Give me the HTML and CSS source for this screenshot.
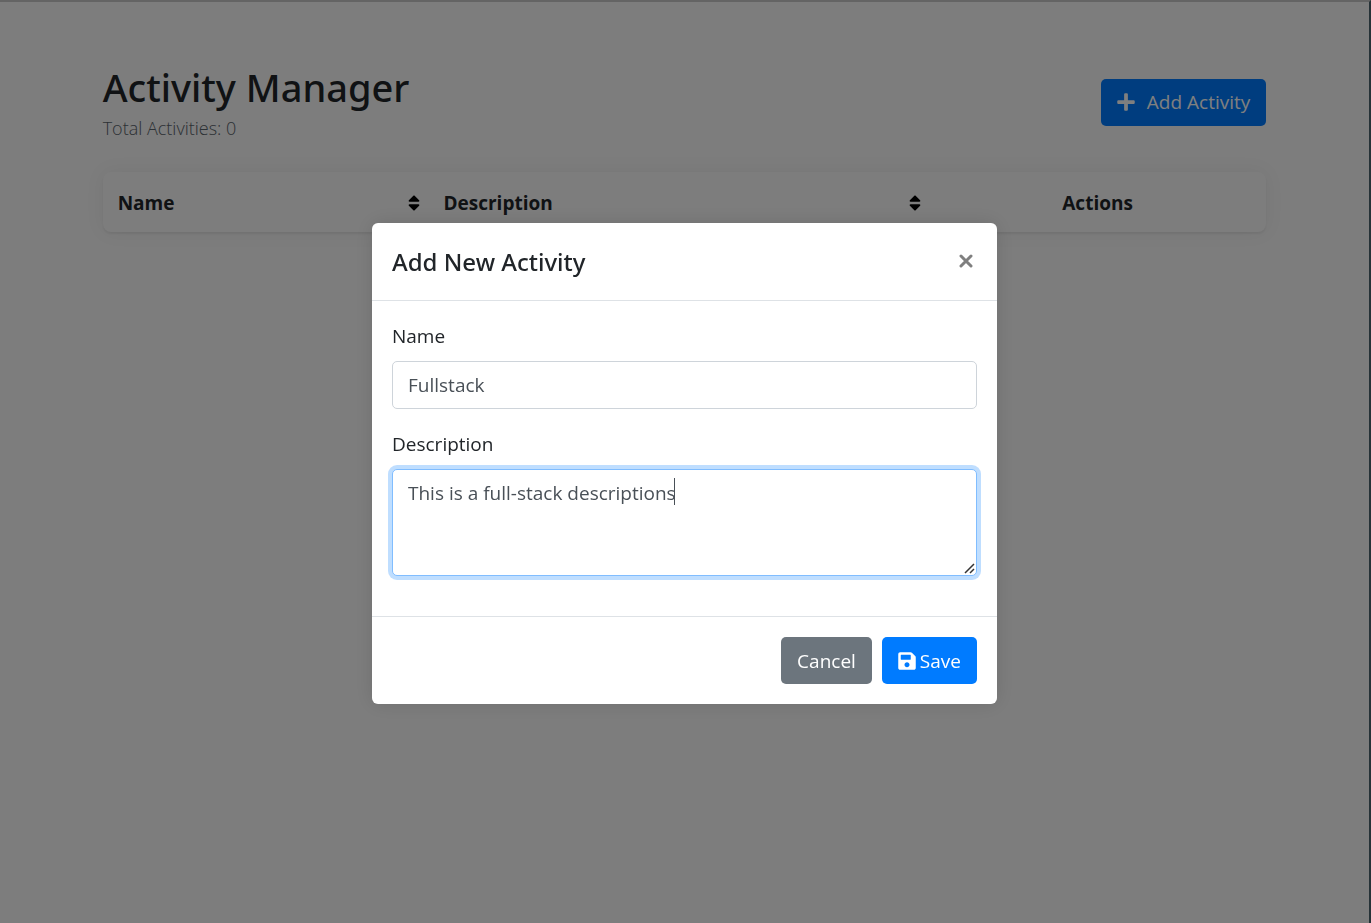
FILE: index.html
```html
<!DOCTYPE html>
<html lang="en">
<head>
<meta charset="utf-8">
<meta name="viewport" content="width=device-width, initial-scale=1">
<title>Activity Manager</title>
<link rel="stylesheet" href="styles.css">
</head>
<body>
<main class="container">
  <header class="page-header">
    <div>
      <h1 class="page-title">Activity Manager</h1>
      <p class="page-count">Total Activities: 0</p>
    </div>
    <button type="button" class="btn btn-primary btn-add">
      <svg class="icon" viewBox="0 0 448 512" aria-hidden="true"><path d="M416 208H272V64c0-17.670-14.330-32-32-32h-32c-17.670 0-32 14.330-32 32v144H32c-17.670 0-32 14.330-32 32v32c0 17.670 14.330 32 32 32h144v144c0 17.670 14.330 32 32 32h32c17.670 0 32-14.330 32-32V304h144c17.670 0 32-14.330 32-32v-32c0-17.670-14.330-32-32-32z"/></svg>
      <span>Add Activity</span>
    </button>
  </header>
  <table class="table">
    <colgroup><col class="col-name"><col class="col-description"><col></colgroup>
    <thead>
      <tr>
        <th scope="col"><div class="th-sort">Name <svg class="sort" viewBox="0 0 320 512" aria-hidden="true"><path d="M41 288h238c21.400 0 32.100 25.900 17 41L177 448c-9.400 9.400-24.600 9.400-33.900 0L24 329c-15.100-15.100-4.400-41 17-41zm255-105L177 64c-9.400-9.400-24.600-9.400-33.900 0L24 183c-15.100 15.100-4.400 41 17 41h238c21.400 0 32.100-25.900 17-41z"/></svg></div></th>
        <th scope="col"><div class="th-sort">Description <svg class="sort" viewBox="0 0 320 512" aria-hidden="true"><path d="M41 288h238c21.400 0 32.100 25.900 17 41L177 448c-9.400 9.400-24.600 9.400-33.900 0L24 329c-15.100-15.100-4.400-41 17-41zm255-105L177 64c-9.400-9.400-24.600-9.400-33.900 0L24 183c-15.100 15.100-4.400 41 17 41h238c21.400 0 32.100-25.900 17-41z"/></svg></div></th>
        <th scope="col" class="th-actions">Actions</th>
      </tr>
    </thead>
  </table>
</main>

<div class="backdrop">
  <form class="modal" role="dialog" aria-modal="true" aria-labelledby="modal-title">
    <header class="modal-header">
      <h2 class="modal-title" id="modal-title">Add New Activity</h2>
      <button type="button" class="close" aria-label="Close">
        <svg class="close-icon" viewBox="0 0 18 18" aria-hidden="true"><path d="M4 4l10 10M14 4L4 14"/></svg>
      </button>
    </header>
    <div class="modal-body">
      <div class="field">
        <label for="name">Name</label>
        <input class="control" id="name" type="text" value="Fullstack">
      </div>
      <div class="field">
        <label for="description">Description</label>
        <div class="area-wrap">
          <textarea class="control control-area" id="description" rows="3" autofocus>This is a full-stack descriptions</textarea>
          <span class="caret"></span>
          <svg class="grip" viewBox="0 0 11 11" aria-hidden="true"><path d="M1 10L10 1M6 10L10 6"/></svg>
        </div>
      </div>
    </div>
    <footer class="modal-footer">
      <button type="button" class="btn btn-secondary">Cancel</button>
      <button type="submit" class="btn btn-primary btn-save">
        <svg class="icon" viewBox="0 0 448 512" aria-hidden="true"><path d="M433.941 129.941l-83.882-83.882A48 48 0 0 0 316.118 32H48C21.490 32 0 53.490 0 80v352c0 26.510 21.490 48 48 48h352c26.510 0 48-21.490 48-48V163.882a48 48 0 0 0-14.059-33.941zM224 416c-35.346 0-64-28.654-64-64 0-35.346 28.654-64 64-64s64 28.654 64 64c0 35.346-28.654 64-64 64zm96-304.520V212c0 6.627-5.373 12-12 12H76c-6.627 0-12-5.373-12-12V108c0-6.627 5.373-12 12-12h228.520c3.183 0 6.235 1.264 8.485 3.515l3.480 3.480A11.996 11.996 0 0 1 320 111.480z"/></svg>
        <span>Save</span>
      </button>
    </footer>
  </form>
</div>
<script src="script.js"></script>
</body>
</html>
```

FILE: script.js
```js
const description = document.getElementById("description");
description.focus();
description.setSelectionRange(description.value.length, description.value.length);
```

FILE: styles.css
```css
*,
*::before,
*::after {
  box-sizing: border-box;
}

body {
  margin: 0;
  min-height: 100vh;
  border-top: 2px solid #c8c8c8;
  border-right: 2px solid #4c646e;
  background: #fafafa;
  color: #212529;
  font-family: "Segoe UI", "Open Sans", "Noto Sans", sans-serif;
  font-size: 19px;
  line-height: 30px;
}

.container {
  width: 85%;
  margin: 0 auto;
  padding-top: 59px;
}

.page-header {
  display: flex;
  justify-content: space-between;
  align-items: center;
  margin-bottom: 29px;
}

.page-title {
  margin: 0;
  font-family: "Segoe UI", "Noto Sans", sans-serif;
  font-size: 38px;
  font-weight: 500;
  line-height: 52px;
}

.page-count {
  margin: 0;
  color: #59626a;
  font-size: 18px;
  font-weight: 300;
}

.btn {
  display: inline-flex;
  align-items: center;
  height: 47px;
  padding: 0 16px;
  border: 0;
  border-radius: 5px;
  color: #fff;
  font: inherit;
}

.btn-primary {
  background: #007bff;
}

.btn-secondary {
  background: #6c757d;
}

.btn-add {
  gap: 12px;
}

.btn-save {
  gap: 4px;
}

.icon {
  width: 18px;
  height: 20px;
  fill: currentColor;
}

.table {
  width: 100%;
  table-layout: fixed;
  border-collapse: separate;
  border-spacing: 0;
  border-radius: 8px;
  background: #fafafa;
  box-shadow: 0 0 20px rgba(0, 0, 0, 0.06), 0 2px 2px rgba(0, 0, 0, 0.06);
}

.col-name {
  width: 28%;
}

.col-description {
  width: 43%;
}

.table th {
  padding: 16px 15px 14px;
  font-weight: 700;
  text-align: left;
}

.table .th-actions {
  text-align: center;
}

.th-sort {
  display: flex;
  justify-content: space-between;
  align-items: center;
}

.sort {
  width: 12px;
  height: 20px;
  margin-right: -7px;
}

.backdrop {
  position: fixed;
  inset: 0;
  display: flex;
  align-items: center;
  justify-content: center;
  padding: 4px 2px 0 0;
  background: rgba(0, 0, 0, 0.5);
}

.modal {
  width: 100%;
  max-width: 625px;
  border-radius: 6px;
  background: #fff;
  box-shadow: 0 0 20px rgba(0, 0, 0, 0.12);
}

.modal-header {
  display: flex;
  justify-content: space-between;
  align-items: flex-start;
  padding: 20px;
  border-bottom: 1px solid #dee2e6;
}

.modal-title {
  margin: 0;
  font-family: "Segoe UI", "Noto Sans", sans-serif;
  font-size: 24px;
  font-weight: 500;
  line-height: 37px;
}

.close {
  display: flex;
  padding: 9px 2px;
  border: 0;
  background: none;
  color: #7f7f7f;
}

.close-icon {
  width: 18px;
  height: 18px;
  fill: none;
  stroke: currentColor;
  stroke-width: 3;
  stroke-linecap: round;
}

.modal-body {
  padding: 20px;
}

.field {
  display: flex;
  flex-direction: column;
  gap: 10px;
  margin-bottom: 20px;
}

.control {
  width: 100%;
  height: 48px;
  padding: 8px 15px;
  border: 1px solid #ced4da;
  border-radius: 5px;
  background: #fff;
  color: #495057;
  font: inherit;
}

.area-wrap {
  position: relative;
}

.control-area {
  display: block;
  height: 107px;
  resize: none;
  caret-color: transparent;
}

.control:focus {
  border-color: #80bdff;
  outline: 0;
  box-shadow: 0 0 0 4px rgba(0, 123, 255, 0.25);
}

.caret {
  position: absolute;
  top: 9px;
  left: 282px;
  width: 1px;
  height: 27px;
  background: #495057;
}

.grip {
  position: absolute;
  right: 2px;
  bottom: 2px;
  width: 11px;
  height: 11px;
  fill: none;
  stroke: #333;
  stroke-width: 1.5;
}

.modal-footer {
  display: flex;
  justify-content: flex-end;
  gap: 10px;
  padding: 20px;
  border-top: 1px solid #dee2e6;
}
```
